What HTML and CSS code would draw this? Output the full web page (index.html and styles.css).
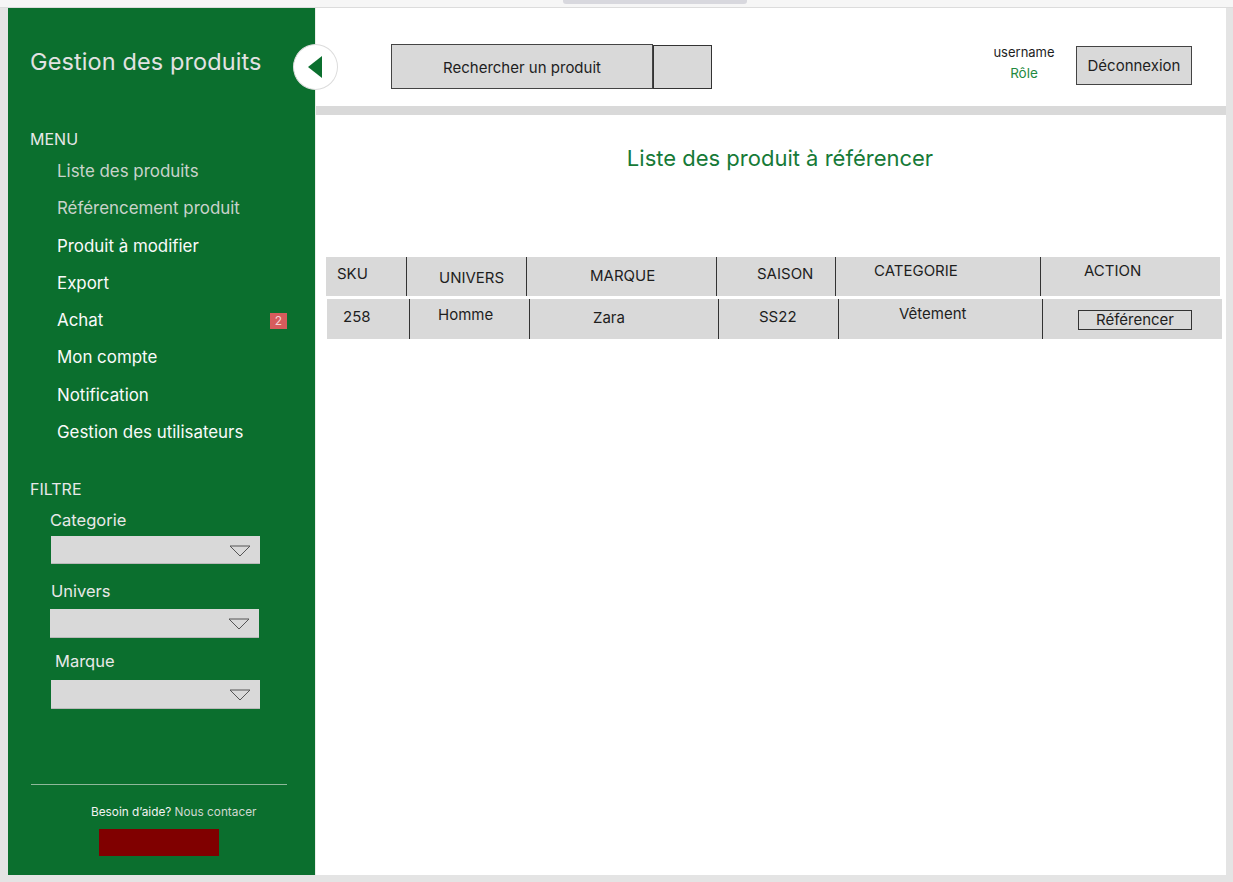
FILE: index.html
```html
<!DOCTYPE html>
<html lang="fr">
<head>
<meta charset="utf-8">
<title>Gestion des produits</title>
<link rel="stylesheet" href="styles.css">
</head>
<body>
<div class="topstrip"><div class="tab"></div></div>
<div class="stage">
  <div class="frame">
    <aside class="sidebar">
      <div class="brand">Gestion des produits</div>
      <div class="section-label menu-label">MENU</div>
      <ul class="menu">
        <li class="item dim">Liste des produits</li>
        <li class="item dim">Référencement produit</li>
        <li class="item">Produit à modifier</li>
        <li class="item">Export</li>
        <li class="item">Achat <span class="badge">2</span></li>
        <li class="item">Mon compte</li>
        <li class="item">Notification</li>
        <li class="item">Gestion des utilisateurs</li>
      </ul>
      <div class="section-label filter-label">FILTRE</div>
      <div class="flabel f-cat">Categorie</div>
      <div class="select s-cat"><svg class="chev" width="22" height="12" viewBox="0 0 22 12"><path d="M1 1 H21 L11 11 Z" fill="none" stroke="#555" stroke-width="1"/></svg></div>
      <div class="flabel f-uni">Univers</div>
      <div class="select s-uni"><svg class="chev" width="22" height="12" viewBox="0 0 22 12"><path d="M1 1 H21 L11 11 Z" fill="none" stroke="#555" stroke-width="1"/></svg></div>
      <div class="flabel f-mar">Marque</div>
      <div class="select s-mar"><svg class="chev" width="22" height="12" viewBox="0 0 22 12"><path d="M1 1 H21 L11 11 Z" fill="none" stroke="#555" stroke-width="1"/></svg></div>
      <div class="footer">
        <div class="divider"></div>
        <div class="help">Besoin d’aide? <span class="contact">Nous contacer</span></div>
        <div class="redbox"></div>
      </div>
    </aside>
    <button class="collapse" aria-label="Réduire">
      <svg width="14" height="22" viewBox="0 0 14 22"><path d="M14 0 L0 11 L14 22 Z" fill="#0b6f2e"/></svg>
    </button>
    <main class="main">
      <header class="header">
        <div class="search">
          <div class="search-field">Rechercher un produit</div>
          <div class="search-btn"></div>
        </div>
        <div class="user">
          <div class="username">username</div>
          <div class="role">Rôle</div>
        </div>
        <button class="logout">Déconnexion</button>
      </header>
      <div class="hbar"></div>
      <h1 class="title">Liste des produit à référencer</h1>
      <div class="table">
        <div class="row head">
          <div class="cell c1 pt8 pl12">SKU</div>
          <div class="cell c2 pt12 pl33">UNIVERS</div>
          <div class="cell c3 pt10 pl64">MARQUE</div>
          <div class="cell c4 pt8 pl41">SAISON</div>
          <div class="cell c5 pt5 pl39">CATEGORIE</div>
          <div class="cell c6 pt5 pl44">ACTION</div>
        </div>
        <div class="row data">
          <div class="cell d1 pt9 pl17">258</div>
          <div class="cell d2 pt7 pl29">Homme</div>
          <div class="cell d3 pt10 pl64">Zara</div>
          <div class="cell d4 pt9 pl41">SS22</div>
          <div class="cell d5 pt6 pl61">Vêtement</div>
          <div class="cell d6 pt11 pl36"><span class="ref-btn">Référencer</span></div>
        </div>
      </div>
    </main>
  </div>
</div>
</body>
</html>
```

FILE: styles.css
```css
* { box-sizing: border-box; }
html, body { margin: 0; padding: 0; }
body {
  width: 1233px;
  height: 882px;
  overflow: hidden;
  background: #e4e4e4;
  font-family: Inter, "Noto Sans", "Liberation Sans", sans-serif;
  color: #222;
}
.topstrip {
  height: 8px;
  background: #f6f6f6;
  border-bottom: 1px solid #dcdcdc;
  display: flex;
}
.tab {
  margin-left: 563px;
  width: 184px;
  height: 4px;
  background: #d8d8de;
  border-radius: 0 0 3px 3px;
}
.stage {
  padding-left: 8px;
  height: 874px;
  background: #e4e4e4;
}
.frame {
  position: relative;
  width: 1218px;
  height: 867px;
  display: flex;
  background: #fff;
}

/* Sidebar */
.sidebar {
  width: 307px;
  background: #0b6f2e;
  display: flex;
  flex-direction: column;
  padding-left: 22px;
  color: #e6e6e6;
}
.brand {
  margin-top: 40px;
  font-size: 23.5px;
  line-height: 28px;
  color: #e2e2e2;
  letter-spacing: 0.1px;
}
.section-label {
  font-size: 16px;
  line-height: 20px;
  color: #e8e8e8;
}
.menu-label { margin-top: 53px; }
.menu {
  list-style: none;
  margin: 4px 0 0;
  padding: 0 28px 0 27px;
}
.item {
  height: 37.3px;
  line-height: 37.3px;
  font-size: 16.9px;
  color: #fafafa;
  display: flex;
  align-items: center;
}
.item.dim { color: #c9d3cb; }
.badge {
  margin-left: auto;
  width: 17px;
  height: 16px;
  background: #d65c5c;
  color: #f3d6d6;
  font-size: 12px;
  line-height: 16px;
  text-align: center;
}
.filter-label { margin-top: 28px; }
.flabel {
  font-size: 16.5px;
  line-height: 20px;
  color: #e8e8e8;
}
.f-cat { margin-top: 11px; margin-left: 20px; }
.f-uni { margin-top: 17px; margin-left: 21px; }
.f-mar { margin-top: 13px; margin-left: 25px; }
.select {
  width: 209px;
  height: 29px;
  background: #d9d9d9;
  border-bottom: 1px solid #b9b9b9;
  display: flex;
  align-items: center;
  justify-content: flex-end;
  padding-right: 9px;
}
.s-cat { margin-top: 6px; margin-left: 21px; height: 28px; }
.s-uni { margin-top: 8px; margin-left: 20px; }
.s-mar { margin-top: 9px; margin-left: 21px; }
.chev { display: block; margin-top: 2px; }
.footer {
  margin-top: auto;
  display: flex;
  flex-direction: column;
}
.divider {
  margin-left: 1px;
  width: 256px;
  height: 1px;
  background: #8fb89a;
}
.help {
  margin-top: 19px;
  margin-left: 61px;
  font-size: 11.8px;
  line-height: 16px;
  color: #f2f2f2;
}
.contact { color: #cfd8d1; }
.redbox {
  margin-top: 9px;
  margin-left: 69px;
  width: 120px;
  height: 27px;
  background: #800000;
  margin-bottom: 19px;
}

/* collapse button */
.collapse {
  position: absolute;
  left: 285px;
  top: 36px;
  width: 45px;
  height: 46px;
  border-radius: 50%;
  background: #fff;
  border: 1px solid #dcdcdc;
  padding: 0 0 0 14px;
  display: flex;
  align-items: center;
  cursor: pointer;
}
.collapse svg { display: block; }

/* Main */
.main {
  flex: 1;
  display: flex;
  flex-direction: column;
  border-left: 1px solid #e9eee9;
}
.header {
  height: 98px;
  display: flex;
  align-items: flex-start;
}
.search {
  margin-top: 36px;
  margin-left: 75px;
  display: flex;
}
.search-field {
  width: 262px;
  height: 45px;
  background: #d9d9d9;
  border: 1px solid #444;
  font-size: 15px;
  line-height: 45px;
  text-align: center;
  color: #1e1e1e;
}
.search-btn {
  width: 59px;
  height: 44px;
  margin-top: 1px;
  background: #d9d9d9;
  border: 1px solid #333;
}
.user {
  margin-left: auto;
  margin-top: 36px;
  width: 66px;
  text-align: center;
}
.username {
  font-size: 13px;
  line-height: 16px;
  color: #1e1e1e;
}
.role {
  margin-top: 5px;
  font-size: 13.5px;
  line-height: 16px;
  color: #1f8a3f;
}
.logout {
  margin-top: 38px;
  margin-left: 19px;
  margin-right: 34px;
  width: 116px;
  height: 39px;
  background: #d9d9d9;
  border: 1px solid #444;
  font-family: inherit;
  font-size: 15px;
  line-height: 37px;
  color: #1e1e1e;
  padding: 0;
}
.hbar {
  height: 9px;
  background: #d9d9d9;
}
.title {
  margin: 31px 0 0;
  padding-left: 18px;
  text-align: center;
  font-size: 22px;
  line-height: 24px;
  font-weight: 400;
  color: #167a37;
}

/* Table */
.table {
  margin-top: 87px;
  margin-left: 10px;
  display: flex;
  flex-direction: column;
  gap: 3px;
}
.row {
  display: flex;
  background: #d9d9d9;
}
.row.head { width: 894px; height: 39px; }
.row.data { width: 895px; height: 40px; margin-left: 1px; }
.cell {
  font-size: 15px;
  line-height: 17px;
  color: #1e1e1e;
  white-space: nowrap;
}
.cell + .cell { border-left: 1px solid #333; }
.c1 { width: 80px; }
.c2 { width: 120px; }
.c3 { width: 190px; }
.c4 { width: 119px; }
.c5 { width: 205px; }
.c6 { flex: 1; }
.d1 { width: 82px; }
.d2 { width: 120px; }
.d3 { width: 189px; }
.d4 { width: 120px; }
.d5 { width: 204px; }
.d6 { flex: 1; }
.pt5 { padding-top: 5px; }
.pt6 { padding-top: 6px; }
.pt7 { padding-top: 7px; }
.pt8 { padding-top: 8px; }
.pt9 { padding-top: 9px; }
.pt10 { padding-top: 10px; }
.pt11 { padding-top: 11px; }
.pt12 { padding-top: 12px; }
.pl12 { padding-left: 11px; }
.pl17 { padding-left: 16px; }
.pl29 { padding-left: 28px; }
.pl33 { padding-left: 32px; }
.pl36 { padding-left: 35px; }
.pl39 { padding-left: 38px; }
.pl41 { padding-left: 40px; }
.pl44 { padding-left: 43px; }
.pl61 { padding-left: 60px; }
.pl64 { padding-left: 63px; }
.ref-btn {
  display: inline-block;
  width: 114px;
  height: 20px;
  border: 1px solid #333;
  text-align: center;
  font-size: 15px;
  line-height: 18px;
}
```
